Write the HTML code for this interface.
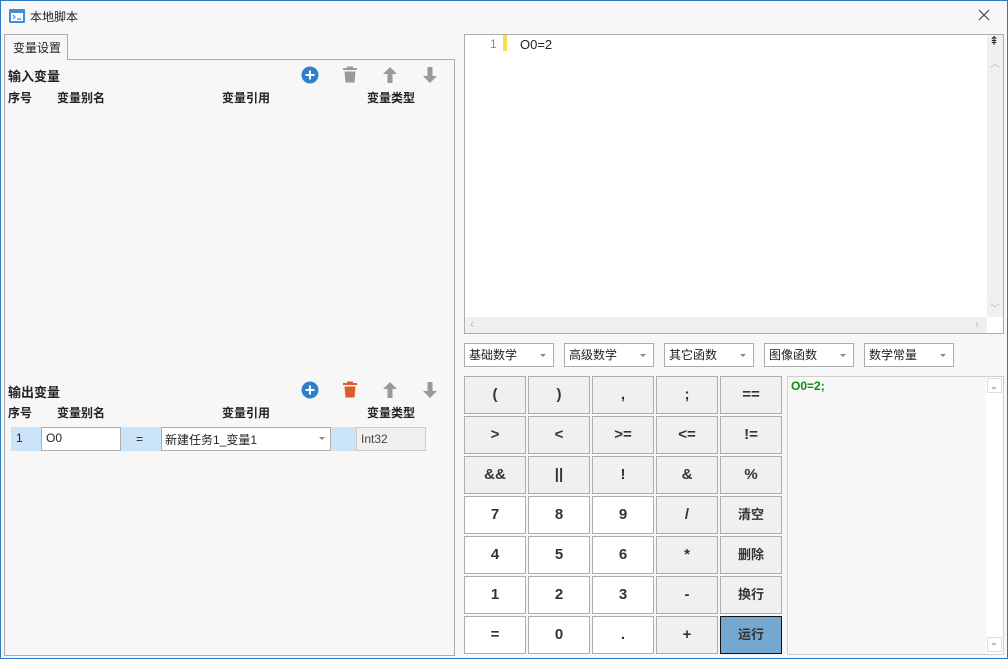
<!DOCTYPE html>
<html><head><meta charset="utf-8"><style>
*{box-sizing:border-box;margin:0;padding:0}
body{width:1008px;height:659px;overflow:hidden;background:#f7f7f7;font-family:"Liberation Sans","Noto Sans CJK SC",sans-serif;font-size:12px;color:#222;position:relative}
.a{position:absolute}
.win{left:0;top:0;width:1008px;height:659px;border:1px solid #2b79c2}
.b{font-weight:bold}
.btn{position:absolute;width:62px;height:38px;border:1px solid #adadad;background:#f0f0f0;text-align:center;line-height:36px;font-weight:bold;font-size:15px;color:#333}
.w{background:#fff}
.dd{position:absolute;top:343px;width:90px;height:24px;border:1px solid #adadad;background:#fff;line-height:22px;padding-left:4px;font-size:12px}
.dd:after{content:"";position:absolute;right:7px;top:10px;border:3px solid transparent;border-top:3px solid #888}
</style></head><body>
<div class="a win"></div>
<svg class="a" style="left:9px;top:9px" width="16" height="14"><rect x="0" y="0" width="16" height="14" rx="1" fill="#3d8fd8"/><rect x="2" y="4" width="12" height="8" fill="#fff"/><path d="M4 6l2 2-2 2M8 10h4" stroke="#3d8fd8" stroke-width="1.2" fill="none"/></svg>
<div class="a" style="left:30px;top:8px;font-size:12px">本地脚本</div>
<svg class="a" style="left:978px;top:9px" width="12" height="12"><path d="M1 1L11 11M11 1L1 11" stroke="#444" stroke-width="1.2"/></svg>

<div class="a" style="left:4px;top:59px;width:451px;height:597px;border:1px solid #adadad;background:#f7f7f7"></div>
<div class="a" style="left:4px;top:34px;width:64px;height:26px;border:1px solid #adadad;border-bottom:none;background:#f7f7f7;padding:4px 0 0 8px">变量设置</div>

<div class="a b" style="left:8px;top:66px;font-size:13px">输入变量</div>
<div class="a b" style="left:8px;top:89px">序号</div>
<div class="a b" style="left:57px;top:89px">变量别名</div>
<div class="a b" style="left:222px;top:89px">变量引用</div>
<div class="a b" style="left:367px;top:89px">变量类型</div>

<div class="a b" style="left:8px;top:382px;font-size:13px">输出变量</div>
<div class="a b" style="left:8px;top:404px">序号</div>
<div class="a b" style="left:57px;top:404px">变量别名</div>
<div class="a b" style="left:222px;top:404px">变量引用</div>
<div class="a b" style="left:367px;top:404px">变量类型</div>

<svg class="a" style="left:300px;top:64px" width="140" height="22">
<circle cx="10" cy="11" r="8.5" fill="#2e7fcc"/><path d="M10 6.5v9M5.5 11h9" stroke="#fff" stroke-width="2"/>
<path d="M43 5h14M48 5v-1.5h4V5" stroke="#9a9a9a" stroke-width="2" fill="none"/><path d="M44.5 7.5h11l-1 11h-9z" fill="#9a9a9a"/>
<path d="M90 3l-7 7h4.5v9h5v-9H97z" fill="#9a9a9a"/>
<path d="M130 19l-7-7h4.5V3h5v9H137z" fill="#9a9a9a"/>
</svg>
<svg class="a" style="left:300px;top:379px" width="140" height="22">
<circle cx="10" cy="11" r="8.5" fill="#2e7fcc"/><path d="M10 6.5v9M5.5 11h9" stroke="#fff" stroke-width="2"/>
<path d="M43 5h14M48 5v-1.5h4V5" stroke="#e05a2a" stroke-width="2" fill="none"/><path d="M44.5 7.5h11l-1 11h-9z" fill="#e05a2a"/>
<path d="M90 3l-7 7h4.5v9h5v-9H97z" fill="#9a9a9a"/>
<path d="M130 19l-7-7h4.5V3h5v9H137z" fill="#9a9a9a"/>
</svg>

<div class="a" style="left:11px;top:427px;width:415px;height:24px;background:#cce4f7"></div>
<div class="a" style="left:16px;top:431px">1</div>
<div class="a" style="left:41px;top:427px;width:80px;height:24px;border:1px solid #adadad;background:#fff;padding:3px 0 0 4px">O0</div>
<div class="a" style="left:136px;top:432px">=</div>
<div class="a" style="left:161px;top:427px;width:170px;height:24px;border:1px solid #adadad;background:#fff;padding:3px 0 0 3px">新建任务1_变量1</div>
<div class="a" style="left:319px;top:437px;border:3px solid transparent;border-top:3px solid #888"></div>
<div class="a" style="left:356px;top:427px;width:70px;height:24px;border:1px solid #ccc;background:#f0f0f0;padding:4px 0 0 4px;color:#444">Int32</div>

<div class="a" style="left:464px;top:34px;width:540px;height:300px;border:1px solid #adadad;background:#fff"></div>
<div class="a" style="left:490px;top:37px;color:#4aa0d8;font-size:12px">1</div>
<div class="a" style="left:503px;top:35px;width:4px;height:16px;background:#f5e050"></div>
<div class="a" style="left:520px;top:37px;font-size:13px">O0=2</div>
<div class="a" style="left:987px;top:35px;width:16px;height:282px;background:#f0f0f0"></div>
<div class="a" style="left:989px;top:34px;font-size:12px">⇞</div>
<div class="a" style="left:465px;top:317px;width:522px;height:16px;background:#f0f0f0"></div>
<div class="a" style="left:470px;top:317px;color:#bbb">‹</div>
<div class="a" style="left:975px;top:317px;color:#bbb">›</div>
<div class="a" style="left:990px;top:55px;color:#bbb;font-size:10px">︿</div>
<div class="a" style="left:990px;top:300px;color:#bbb;font-size:10px">﹀</div>

<div class="dd" style="left:464px">基础数学</div>
<div class="dd" style="left:564px">高级数学</div>
<div class="dd" style="left:664px">其它函数</div>
<div class="dd" style="left:764px">图像函数</div>
<div class="dd" style="left:864px">数学常量</div>

<div class="btn" style="left:464px;top:376px">(</div><div class="btn" style="left:528px;top:376px">)</div><div class="btn" style="left:592px;top:376px">,</div><div class="btn" style="left:656px;top:376px">;</div><div class="btn" style="left:720px;top:376px">==</div>
<div class="btn" style="left:464px;top:416px">&gt;</div><div class="btn" style="left:528px;top:416px">&lt;</div><div class="btn" style="left:592px;top:416px">&gt;=</div><div class="btn" style="left:656px;top:416px">&lt;=</div><div class="btn" style="left:720px;top:416px">!=</div>
<div class="btn" style="left:464px;top:456px">&amp;&amp;</div><div class="btn" style="left:528px;top:456px">||</div><div class="btn" style="left:592px;top:456px">!</div><div class="btn" style="left:656px;top:456px">&amp;</div><div class="btn" style="left:720px;top:456px">%</div>
<div class="btn w" style="left:464px;top:496px">7</div><div class="btn w" style="left:528px;top:496px">8</div><div class="btn w" style="left:592px;top:496px">9</div><div class="btn" style="left:656px;top:496px">/</div><div class="btn" style="left:720px;top:496px;font-size:13px">清空</div>
<div class="btn w" style="left:464px;top:536px">4</div><div class="btn w" style="left:528px;top:536px">5</div><div class="btn w" style="left:592px;top:536px">6</div><div class="btn" style="left:656px;top:536px">*</div><div class="btn" style="left:720px;top:536px;font-size:13px">删除</div>
<div class="btn w" style="left:464px;top:576px">1</div><div class="btn w" style="left:528px;top:576px">2</div><div class="btn w" style="left:592px;top:576px">3</div><div class="btn" style="left:656px;top:576px">-</div><div class="btn" style="left:720px;top:576px;font-size:13px">换行</div>
<div class="btn w" style="left:464px;top:616px">=</div><div class="btn w" style="left:528px;top:616px">0</div><div class="btn w" style="left:592px;top:616px">.</div><div class="btn" style="left:656px;top:616px">+</div><div class="btn" style="left:720px;top:616px;font-size:13px;background:#75a7cf;border-color:#111">运行</div>

<div class="a" style="left:787px;top:376px;width:217px;height:279px;border:1px solid #d0d0d0;background:#f7f7f7"></div>
<div class="a b" style="left:791px;top:379px;color:#118811;font-size:12px">O0=2;</div>
<div class="a" style="left:986px;top:377px;width:17px;height:277px;background:#fff"></div>
<div class="a" style="left:987px;top:378px;width:15px;height:15px;border:1px solid #ddd"></div>
<div class="a" style="left:991px;top:383px;border:3px solid transparent;border-bottom:3px solid #bbb"></div>
<div class="a" style="left:987px;top:637px;width:15px;height:15px;border:1px solid #ddd"></div>
<div class="a" style="left:991px;top:643px;border:3px solid transparent;border-top:3px solid #bbb"></div>
</body></html>
